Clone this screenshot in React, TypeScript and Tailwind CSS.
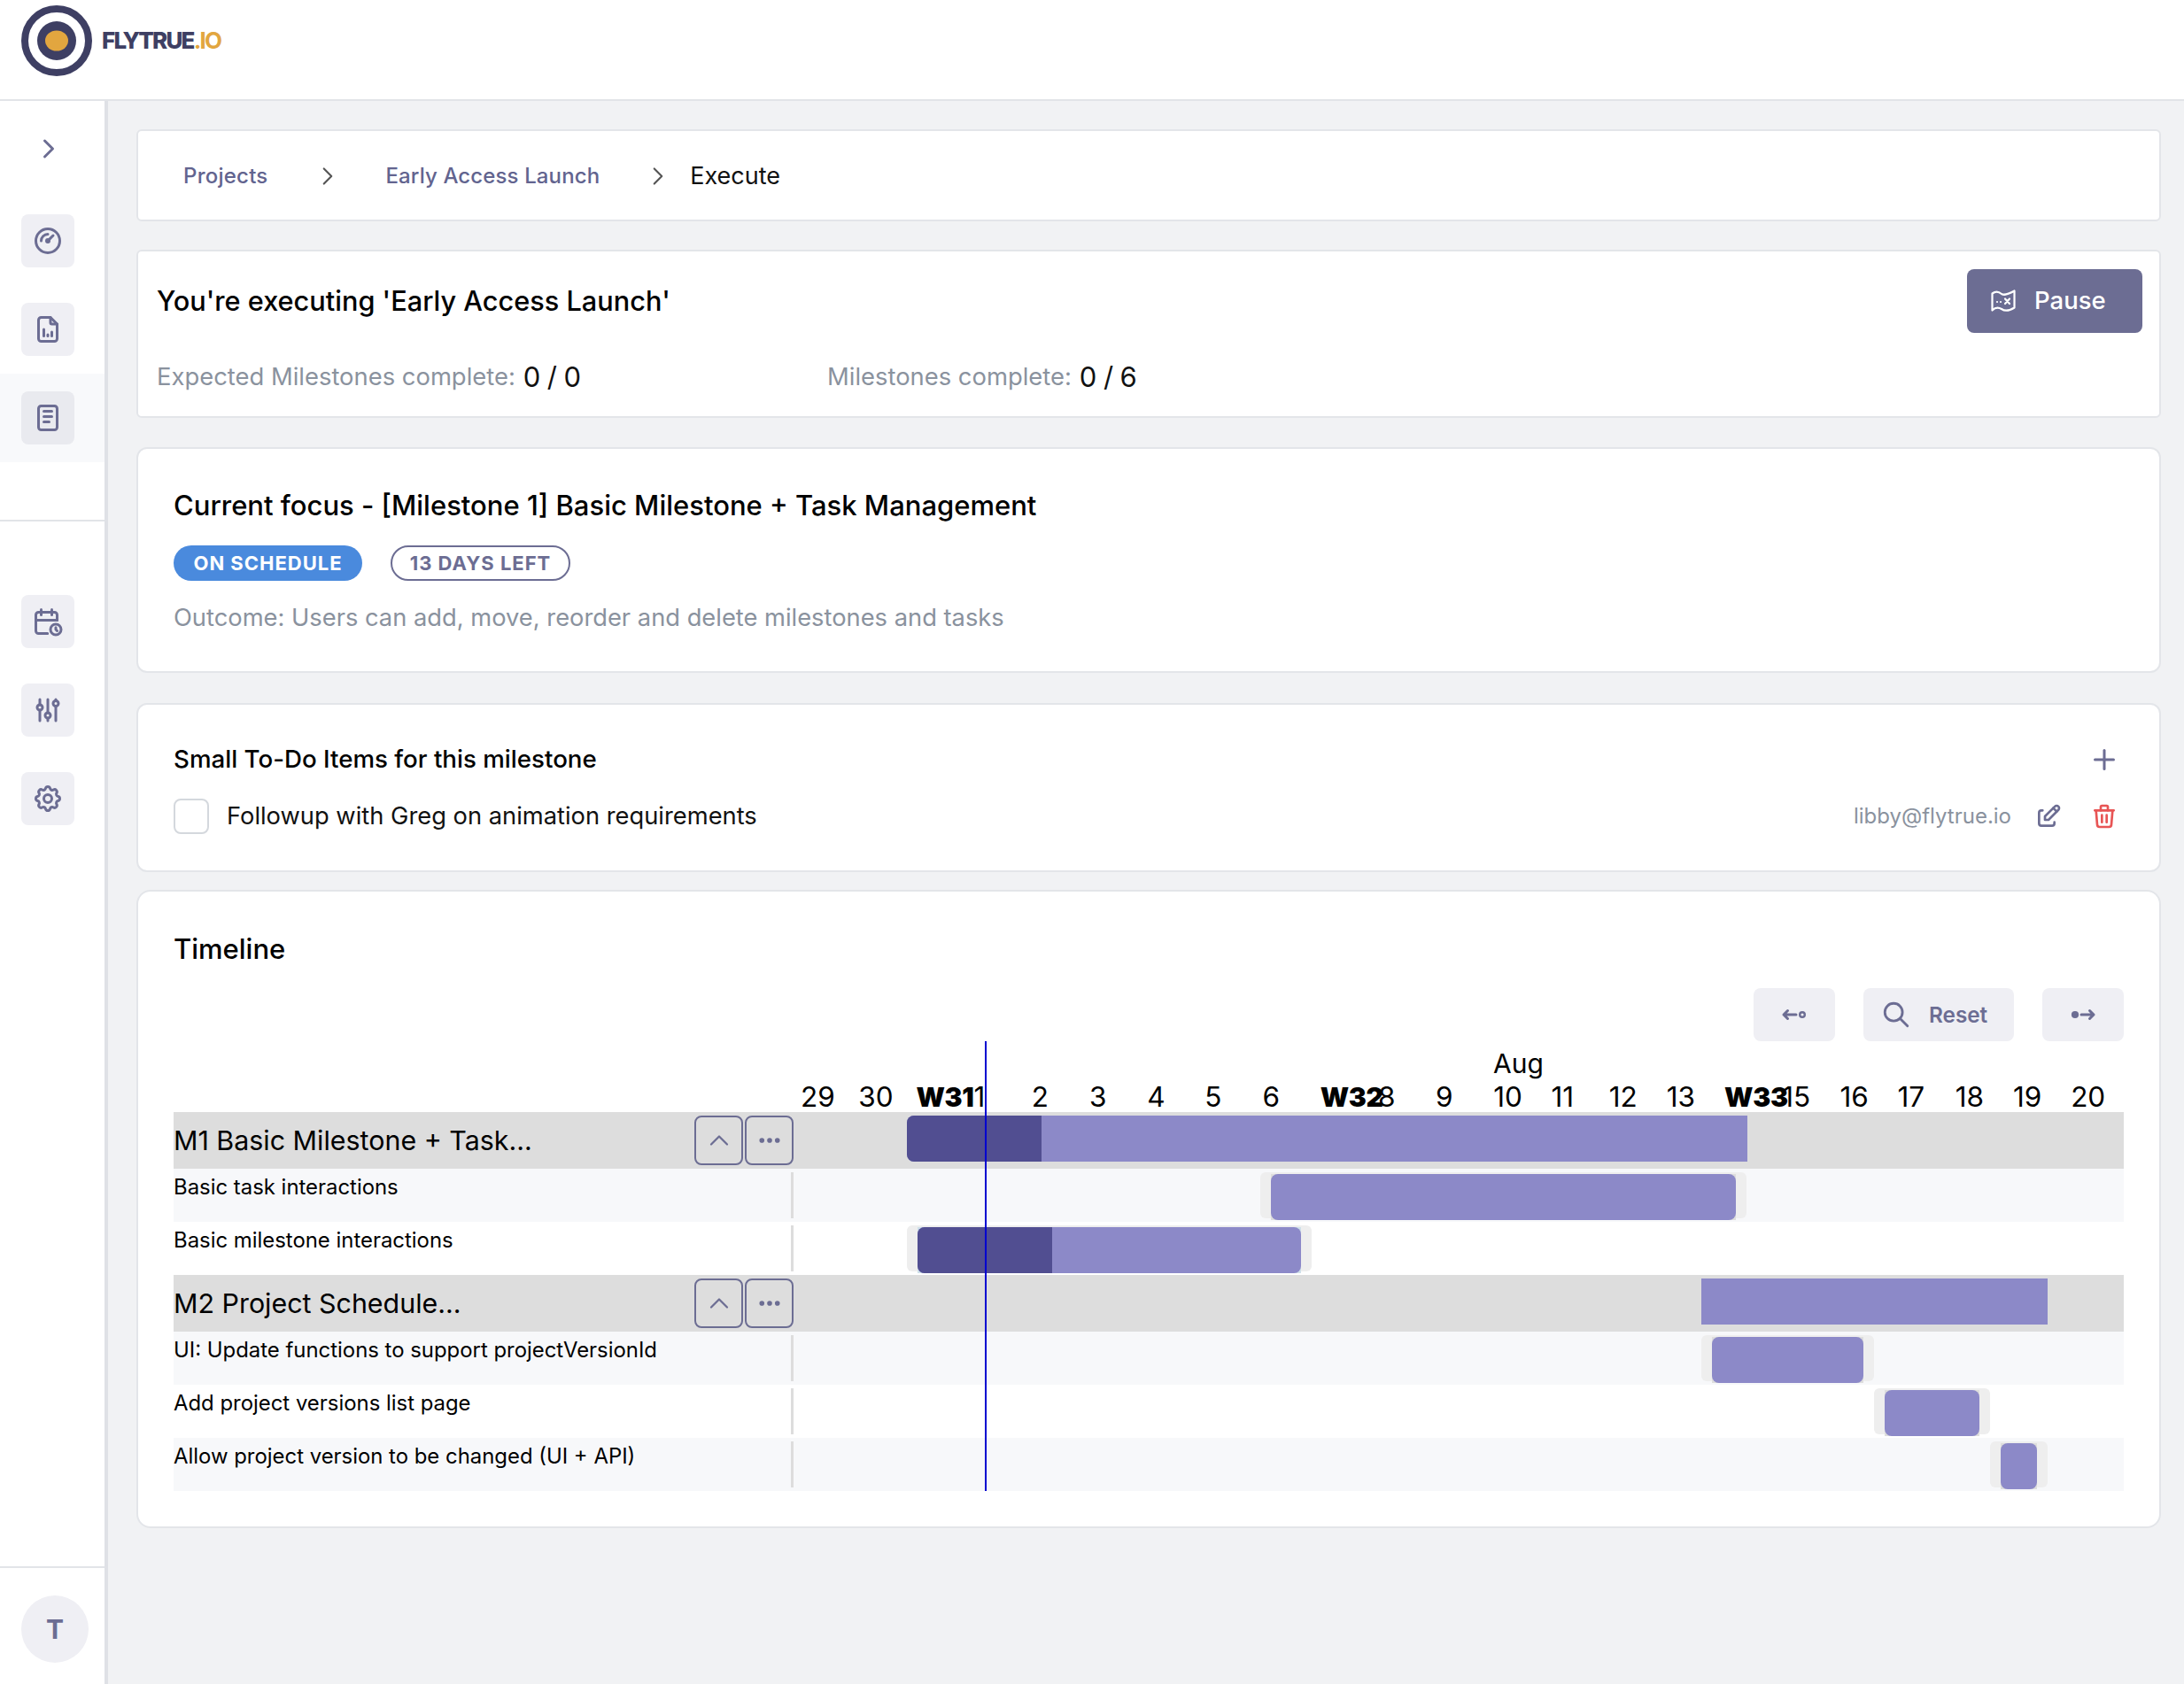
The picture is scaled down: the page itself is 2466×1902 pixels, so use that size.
import {
  TbAdjustments,
  TbCalendarTime,
  TbChevronRight,
  TbChevronUp,
  TbDots,
  TbEdit,
  TbFileAnalytics,
  TbGauge,
  TbNotes,
  TbPlus,
  TbSearch,
  TbSettings,
  TbTrash,
} from "react-icons/tb";
import type { ReactNode } from "react";

const days = ["29", "30", "W31", "1", "2", "3", "4", "5", "6", "W32", "8", "9", "10", "11", "12", "13", "W33", "15", "16", "17", "18", "19", "20"];

function SideButton({ children, active }: { children: ReactNode; active?: boolean }) {
  return (
    <div className={active ? "h-[100px] flex items-center pl-6 bg-[#f8f9fb]" : "h-[100px] flex items-center pl-6"}>
      <div className={active ? "w-[60px] h-[60px] rounded-lg bg-[#e9eaef] flex items-center justify-center text-[#6c6d93]" : "w-[60px] h-[60px] rounded-lg bg-[#efeff4] flex items-center justify-center text-[#6c6d93]"}>
        {children}
      </div>
    </div>
  );
}

function Sidebar() {
  return (
    <aside className="w-[122px] shrink-0 border-r-4 border-[#dfe1e6] bg-white flex flex-col">
      <div className="h-[108px] flex items-center pl-[37px] text-[#6c6d93]">
        <TbChevronRight size={36} />
      </div>
      <SideButton><TbGauge size={36} /></SideButton>
      <SideButton><TbFileAnalytics size={36} /></SideButton>
      <SideButton active><TbNotes size={36} /></SideButton>
      <div className="mt-[65px] h-[2px] bg-[#e2e4e8]" />
      <div className="h-[63px]" />
      <SideButton><TbCalendarTime size={36} /></SideButton>
      <SideButton><TbAdjustments size={36} /></SideButton>
      <SideButton><TbSettings size={36} /></SideButton>
      <div className="flex-1" />
      <div className="h-[133px] border-t-2 border-[#e2e4e8] pl-6 pt-[31px]">
        <div className="w-[76px] h-[76px] rounded-full bg-[#efeff4] flex items-center justify-center text-[#6c6d93] text-[30px] font-bold">T</div>
      </div>
    </aside>
  );
}

function MapIcon() {
  return (
    <svg width="30" height="30" viewBox="0 0 30 30" fill="none" stroke="currentColor" strokeWidth="2.2" strokeLinejoin="round" strokeLinecap="round">
      <path d="M2.5 6.5C6 4 10 4.5 13 7c3.5 2 8 0 14.500-3.500v19c-5.500 3.500-11 4-14.500 1.500-3.500-2-7.500-1.500-10.500 1.500z" />
      <path d="M8 16h.01M12 16h.01" />
      <path d="M17 12.500l5 5.500M22 12.500l-5 5.500" />
    </svg>
  );
}

function ArrowLeftDot() {
  return (
    <svg width="30" height="30" viewBox="0 0 30 30" fill="none" stroke="currentColor" strokeWidth="3" strokeLinecap="round" strokeLinejoin="round">
      <path d="M17 15H3M7.500 10.500L3 15l4.500 4.500" />
      <circle cx="24" cy="15" r="2.800" strokeWidth="2.400" />
    </svg>
  );
}

function ArrowRightDot() {
  return (
    <svg width="30" height="30" viewBox="0 0 30 30" fill="none" stroke="currentColor" strokeWidth="3" strokeLinecap="round" strokeLinejoin="round">
      <path d="M13 15h14M22.500 10.500L27 15l-4.500 4.500" />
      <circle cx="6" cy="15" r="2.600" fill="currentColor" />
    </svg>
  );
}

function Header() {
  return (
    <header className="h-[114px] shrink-0 bg-white border-b-2 border-[#e2e4e8] flex items-start pl-6 pt-[6px]">
      <svg width="80" height="80" viewBox="0 0 80 80">
        <circle cx="40" cy="40" r="36" fill="white" stroke="#3e3f63" strokeWidth="8" />
        <circle cx="40" cy="40" r="22" fill="#3e3f63" />
        <ellipse cx="40" cy="40" rx="13" ry="11.500" fill="#e2a63f" />
      </svg>
      <div className="ml-[11px] mt-[25px] text-[26px] leading-[30px] font-extrabold tracking-[-0.07em] text-[#3e3f63]">
        FLYTRUE<span className="text-[#e2a63f] font-bold">.IO</span>
      </div>
    </header>
  );
}

function Breadcrumbs() {
  return (
    <div className="h-[104px] bg-white border-2 border-[#e3e5e9] rounded-md flex items-center pl-[51px] pt-[2px]">
      <span className="text-[24px] font-medium text-[#62648f] tracking-[0.01em]">Projects</span>
      <TbChevronRight size={34} strokeWidth={1.500} className="ml-[50px] text-[#555]" />
      <span className="ml-[49px] text-[24px] font-medium text-[#62648f] tracking-[0.005em]">Early Access Launch</span>
      <TbChevronRight size={34} strokeWidth={1.500} className="ml-[49px] text-[#555]" />
      <span className="ml-[19px] text-[27px] text-[#111]">Execute</span>
    </div>
  );
}

function Executing() {
  return (
    <div className="mt-[32px] h-[190px] bg-white border-2 border-[#e3e5e9] rounded-md pl-[21px] pr-[19px]">
      <div className="flex items-start justify-between pt-[20px]">
        <div className="mt-[16px] text-[30.700px] leading-[40px] font-[450] text-black">You're executing 'Early Access Launch'</div>
        <button className="w-[198px] h-[72px] bg-[#6c6d93] rounded-lg text-white flex items-center pl-[26px] gap-[20px] text-[27.500px] font-medium">
          <MapIcon />
          Pause
        </button>
      </div>
      <div className="flex items-center mt-[28px] h-[44px]">
        <div className="w-[757px] flex items-center">
          <span className="text-[27.400px] text-[#8a929e]">Expected Milestones complete:</span>
          <span className="ml-[9px] text-[31px] text-[#111] tracking-[-0.02em]">0 / 0</span>
        </div>
        <span className="text-[27.400px] text-[#8a929e]">Milestones complete:</span>
        <span className="ml-[9px] text-[31px] text-[#111] tracking-[-0.02em]">0 / 6</span>
      </div>
    </div>
  );
}

function CurrentFocus() {
  return (
    <div className="mt-[33px] h-[255px] bg-white border-2 border-[#e3e5e9] rounded-xl px-[40px] pt-[44px]">
      <div className="text-[31px] leading-[40px] font-[450] text-black">Current focus - [Milestone 1] Basic Milestone + Task Management</div>
      <div className="flex gap-[32px] mt-[25px]">
        <span className="h-[40px] w-[213px] rounded-full bg-[#4a8add] text-white text-[22px] font-bold tracking-[0.045em] flex items-center justify-center">ON SCHEDULE</span>
        <span className="h-[40px] w-[203px] rounded-full border-2 border-[#6c6d93] text-[#6c6d93] text-[22px] font-bold tracking-[0.045em] flex items-center justify-center">13 DAYS LEFT</span>
      </div>
      <div className="mt-[23px] text-[27.300px] leading-[38px] text-[#8a929e]">Outcome: Users can add, move, reorder and delete milestones and tasks</div>
    </div>
  );
}

function TodoCard() {
  return (
    <div className="mt-[34px] h-[191px] bg-white border-2 border-[#e3e5e9] rounded-xl px-[40px] pt-[42px]">
      <div className="flex items-center justify-between h-[40px]">
        <span className="text-[27.700px] font-[450] text-black">Small To-Do Items for this milestone</span>
        <TbPlus size={36} className="mr-[4px] text-[#6c6d93]" />
      </div>
      <div className="flex items-center h-[40px] mt-[24px]">
        <div className="w-[40px] h-[40px] rounded-lg border-2 border-[#d4d8dd] bg-white" />
        <span className="ml-[20px] text-[27.300px] text-[#111]">Followup with Greg on animation requirements</span>
        <div className="flex-1" />
        <span className="text-[24px] text-[#8a929e]">libby@flytrue.io</span>
        <TbEdit size={32} className="ml-[26px] text-[#6c6d93]" />
        <TbTrash size={32} className="ml-[31px] mr-[6px] text-[#e85555]" />
      </div>
    </div>
  );
}

function RowControls() {
  return (
    <div className="flex gap-[2px] shrink-0 ml-auto">
      <div className="w-[55px] h-[56px] rounded-lg border-2 border-[#6c6d93] flex items-center justify-center text-[#6c6d93]">
        <TbChevronUp size={36} strokeWidth={1.500} />
      </div>
      <div className="w-[55px] h-[56px] rounded-lg border-2 border-[#6c6d93] flex items-center justify-center text-[#6c6d93]">
        <TbDots size={30} strokeWidth={2.500} />
      </div>
    </div>
  );
}

function MilestoneRow({ label, children }: { label: string; children: ReactNode }) {
  return (
    <div className="h-[64px] bg-[#dddddd] flex items-start">
      <div className="w-[700px] shrink-0 h-full flex items-center">
        <span className="text-[30.400px] text-black pt-[2px]">{label}</span>
        <RowControls />
      </div>
      {children}
    </div>
  );
}

function TaskRow({ label, tinted, children }: { label: string; tinted?: boolean; children: ReactNode }) {
  return (
    <div className={tinted ? "h-[60px] bg-[#f7f8fa] flex items-start" : "h-[60px] bg-white flex items-start"}>
      <div className="w-[697px] shrink-0 pt-[6px] text-[23.900px] leading-[30px] text-black">{label}</div>
      <div className="w-[3px] h-[52px] mt-[4px] shrink-0 bg-[#dddddd]" />
      {children}
    </div>
  );
}

function Gantt() {
  return (
    <div className="relative">
      <div className="h-[80px]">
        <div className="h-[38px] pl-[1490px] pt-[7px] text-[30px] leading-[36px] text-black">Aug</div>
        <div className="flex pl-[708px] h-[42px] pt-[7px] items-start">
          {days.map((d) => (
            <div key={d} className={d.startsWith("W") ? "w-[65.200px] shrink-0 whitespace-nowrap text-[30px] leading-[36px] font-black tracking-[-0.01em] text-black" : "w-[65.200px] shrink-0 whitespace-nowrap text-[31.500px] leading-[36px] text-black"}>
              {d}
            </div>
          ))}
        </div>
      </div>

      <MilestoneRow label="M1 Basic Milestone + Task...">
        <div className="ml-[128px] mt-[4px] w-[949px] h-[52px] bg-[#8c89c8] rounded-l-lg">
          <div className="w-[152px] h-full bg-[#514e91] rounded-l-lg" />
        </div>
      </MilestoneRow>
      <TaskRow label="Basic task interactions" tinted>
        <div className="ml-[527px] mt-[4px] w-[549px] h-[52px] bg-[#eeeeee] rounded-md">
          <div className="ml-[12px] mt-[2px] w-[525px] h-[52px] bg-[#dddddd]">
            <div className="w-full h-full bg-[#8c89c8] rounded-lg" />
          </div>
        </div>
      </TaskRow>
      <TaskRow label="Basic milestone interactions">
        <div className="ml-[128px] mt-[4px] w-[457px] h-[52px] bg-[#eeeeee] rounded-md">
          <div className="ml-[12px] mt-[2px] w-[433px] h-[52px] bg-[#cfe0ea]">
            <div className="w-full h-full bg-[#8c89c8] rounded-lg">
              <div className="w-[152px] h-full bg-[#514e91] rounded-l-lg" />
            </div>
          </div>
        </div>
      </TaskRow>
      <MilestoneRow label="M2 Project Schedule...">
        <div className="ml-[1025px] mt-[4px] w-[391px] h-[52px] bg-[#8c89c8]" />
      </MilestoneRow>
      <TaskRow label="UI: Update functions to support projectVersionId" tinted>
        <div className="ml-[1025px] mt-[4px] w-[195px] h-[52px] bg-[#eeeeee] rounded-md">
          <div className="ml-[12px] mt-[2px] w-[171px] h-[52px] bg-[#dddddd]">
            <div className="w-full h-full bg-[#8c89c8] rounded-lg" />
          </div>
        </div>
      </TaskRow>
      <TaskRow label="Add project versions list page">
        <div className="ml-[1220px] mt-[4px] w-[131px] h-[52px] bg-[#eeeeee] rounded-md">
          <div className="ml-[12px] mt-[2px] w-[107px] h-[52px] bg-[#dddddd]">
            <div className="w-full h-full bg-[#8c89c8] rounded-lg" />
          </div>
        </div>
      </TaskRow>
      <TaskRow label="Allow project version to be changed (UI + API)" tinted>
        <div className="ml-[1351px] mt-[4px] w-[65px] h-[52px] bg-[#eeeeee] rounded-md">
          <div className="ml-[12px] mt-[2px] w-[41px] h-[52px] bg-[#dddddd]">
            <div className="w-full h-full bg-[#8c89c8] rounded-lg" />
          </div>
        </div>
      </TaskRow>

      {/* today marker */}
      <div className="absolute left-[916px] top-0 bottom-0 w-[2px] bg-[#0000d0]" />
    </div>
  );
}

function Timeline() {
  return (
    <div className="mt-[20px] h-[721px] bg-white border-2 border-[#e3e5e9] rounded-2xl px-[40px] pt-[45px]">
      <div className="text-[31px] leading-[40px] font-[450] text-black">Timeline</div>
      <div className="flex justify-end gap-[32px] mt-[24px]">
        <button className="w-[92px] h-[60px] rounded-lg bg-[#efeff4] text-[#6c6d93] flex items-center justify-center"><ArrowLeftDot /></button>
        <button className="w-[170px] h-[60px] rounded-lg bg-[#efeff4] text-[#6c6d93] flex items-center pl-[20px] gap-[20px] text-[24.300px] font-semibold">
          <TbSearch size={34} />
          Reset
        </button>
        <button className="w-[92px] h-[60px] rounded-lg bg-[#efeff4] text-[#6c6d93] flex items-center justify-center"><ArrowRightDot /></button>
      </div>
      <Gantt />
    </div>
  );
}

export default function App() {
  return (
    <div className="w-[2466px] h-[1902px] flex flex-col font-['Inter',sans-serif] overflow-hidden">
      <Header />
      <div className="flex flex-1 min-h-0">
        <Sidebar />
        <main className="flex-1 min-w-0 bg-[#f1f2f4] pl-[32px] pr-[26px] pt-[32px]">
          <Breadcrumbs />
          <Executing />
          <CurrentFocus />
          <TodoCard />
          <Timeline />
        </main>
      </div>
    </div>
  );
}
